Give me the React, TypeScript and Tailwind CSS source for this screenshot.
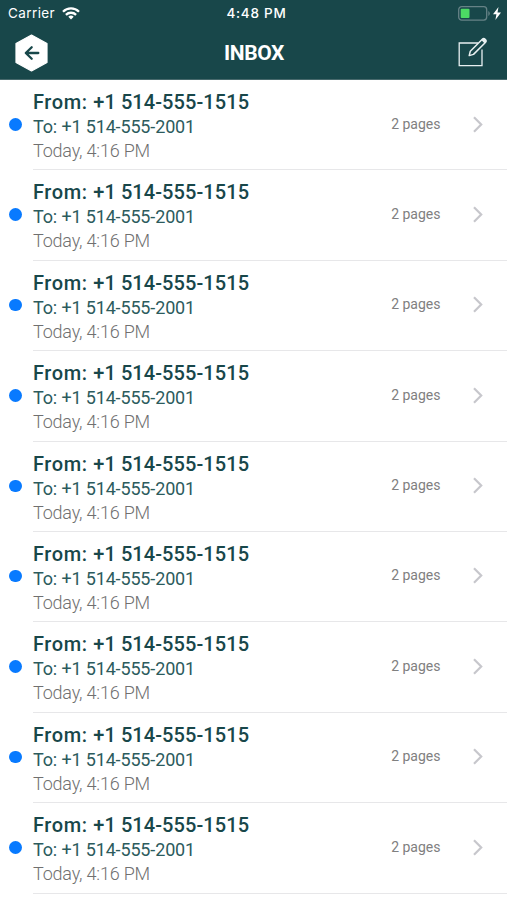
const messages = Array.from({ length: 9 }, (_, id) => ({
  id,
  from: "+1 514-555-1515",
  to: "+1 514-555-2001",
  date: "Today, 4:16 PM",
  pages: "2 pages",
}));

function StatusBar() {
  return (
    <div className="grid h-[27px] grid-cols-3 items-center pr-[6px] pl-[8px] font-['Inter','Liberation_Sans',sans-serif] text-[13.5px]">
      <div className="flex items-center gap-[7px]">
        <span className="tracking-[0.4px]">Carrier</span>
        <svg width="18" height="13" viewBox="0 0 18 13" fill="none" stroke="white" strokeWidth="2.3">
          <path d="M1 4.7a11.4 11.4 0 0 1 16 0M3.9 7.8a7.4 7.4 0 0 1 10.2 0" />
          <path d="M9 12.5 6.3 9.8a4 4 0 0 1 5.4 0z" fill="white" stroke="none" />
        </svg>
      </div>
      <span className="pl-[4px] text-center text-[13.5px] font-medium tracking-[0.75px]">4:48 PM</span>
      <div className="flex items-center justify-end gap-[3px]">
        <svg width="32" height="15" viewBox="0 0 32 15">
          <rect x="0.7" y="0.7" width="28" height="13.4" rx="3" fill="none" stroke="#668286" strokeWidth="1.3" />
          <rect x="2.7" y="2.8" width="8.8" height="9.2" rx="1" fill="#4cd964" />
          <path d="M30.3 5a2.8 2.8 0 0 1 0 5z" fill="#668286" />
        </svg>
        <svg width="8" height="13" viewBox="0 0 8 13" fill="white">
          <path d="M5.5 0 0 7.2h3.4L2.4 13 8 5.5H4.5z" />
        </svg>
      </div>
    </div>
  );
}

function NavBar() {
  return (
    <div className="grid h-[52px] grid-cols-3 items-center pr-[19px] pl-[15px]">
      <button aria-label="Back" className="w-[34px]">
        <svg width="34" height="38" viewBox="0 0 34 38" className="block">
          <path d="M16.5 1 32 9.6v18.8L16.5 37 1 28.4V9.6z" fill="white" stroke="white" strokeWidth="1.2" strokeLinejoin="round" />
          <path d="M23.3 19H11M16.7 13.2 10.8 19l5.9 5.8" fill="none" stroke="#18474a" strokeWidth="2.3" strokeLinecap="round" strokeLinejoin="round" />
        </svg>
      </button>
      <h1 className="pl-[5px] text-center text-[21px] leading-none font-bold tracking-[-0.4px]">INBOX</h1>
      <button aria-label="Compose" className="mb-[2px] justify-self-end">
        <svg width="30" height="30" viewBox="0 0 30 30" fill="none" stroke="#e8f0f1" className="block">
          <path d="M20 6H1.2v22.6H24V12.5" strokeWidth="1.3" />
          <path d="m11.2 18.6 1.1-4.3L24.3 2.3a2 2 0 0 1 2.8 0l.3.3a2 2 0 0 1 0 2.8L15.5 17.4z" strokeWidth="1.5" strokeLinejoin="round" />
          <path d="m23.3 3.1 3.3 3.3 1-1a2.1 2.1 0 0 0 0-3l-.3-.3a2.1 2.1 0 0 0-3 0z" fill="#e8f0f1" stroke="none" />
        </svg>
      </button>
    </div>
  );
}

export default function App() {
  return (
    <div className="h-[900px] w-full overflow-hidden bg-white font-['Roboto','Liberation_Sans',sans-serif]">
      <header className="h-[80px] border-b border-[#47696c] bg-[#18474a] text-white">
        <StatusBar />
        <NavBar />
      </header>
      <ul>
        {messages.map((m) => (
          <li key={m.id} className="flex h-[90.4px] items-stretch pl-[9px]">
            <span className="mt-[38px] mr-[11.5px] size-[12.5px] shrink-0 rounded-full bg-[#087aff]" />
            <div className="flex flex-1 border-b border-[#e7e7e9] whitespace-nowrap">
              <div className="flex-1 pt-[10px]">
                <p className="text-[20px] leading-[24px] font-medium tracking-[0.08px] text-[#18474a]">
                  <span className="tracking-[0.6px]">From: </span>
                  {m.from}
                </p>
                <p className="mt-px text-[18px] leading-[24px] tracking-[-0.15px] text-[#2c5b5d]">To: {m.to}</p>
                <p className="text-[18px] leading-[24px] font-light tracking-[-0.2px] text-[#707070]">{m.date}</p>
              </div>
              <span className="mt-[33.5px] text-[14px] leading-5 text-[#808080]">{m.pages}</span>
              <svg width="10" height="17" viewBox="0 0 10 17" fill="none" stroke="#c7c7cc" strokeWidth="2.2" className="mt-[35.5px] mr-[24.5px] ml-[32px]">
                <path d="m1 1.3 7.2 7.2L1 15.7" />
              </svg>
            </div>
          </li>
        ))}
      </ul>
    </div>
  );
}
